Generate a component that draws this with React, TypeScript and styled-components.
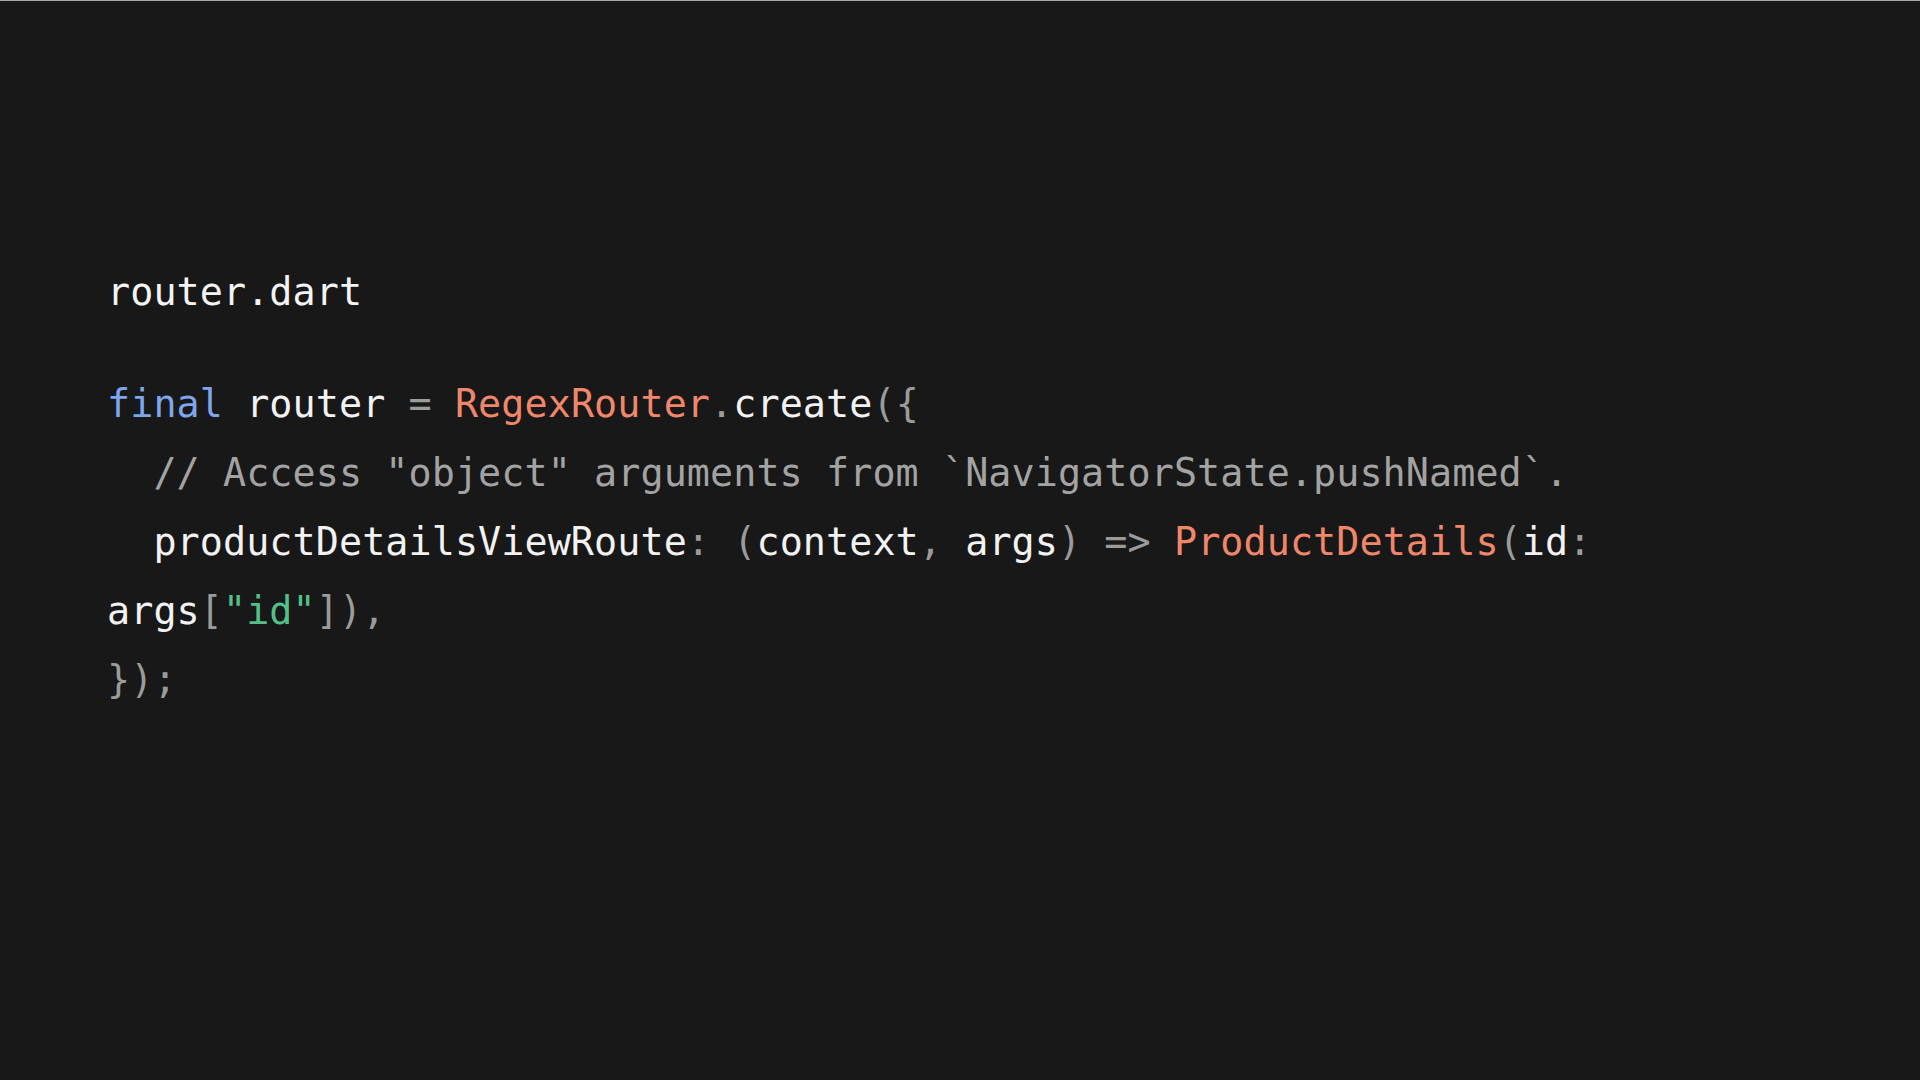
import React from "react";
import styled, { createGlobalStyle } from "styled-components";

const Global = createGlobalStyle`
  html, body { margin: 0; padding: 0; background: #181818; }
  body { font-family: "DejaVu Sans Mono", "Liberation Mono", monospace; }
`;

const Page = styled.div`
  box-sizing: border-box;
  width: 1920px;
  height: 1080px;
  background: #181818;
  border-top: 1px solid #a9a9a9;
  padding: 256px 0 0 107px;
  font-family: "DejaVu Sans Mono", "Liberation Mono", monospace;
  font-size: 38.4px;
  letter-spacing: 0.08px;
  line-height: 69px;
  color: #f2f2f2;
`;

const FileName = styled.div`
  margin-bottom: 43px;
  color: #f4f4f4;
`;

const Code = styled.pre`
  margin: 0;
  font: inherit;
  letter-spacing: inherit;
  width: 1600px;
  white-space: pre-wrap;
`;

type Kind = "kw" | "cls" | "punct" | "comment" | "str" | "id";

const colors: Record<Kind, string> = {
  kw: "#7fa5ee",
  cls: "#f0876b",
  punct: "#9b9b9b",
  comment: "#a3a3a3",
  str: "#55bf89",
  id: "#f2f2f2",
};

const Tok = styled.span<{ $k: Kind }>`
  color: ${(p) => colors[p.$k]};
`;

export default function App() {
  return (
    <>
      <Global />
      <Page>
        <FileName>router.dart</FileName>
        <Code>
          <Tok $k="kw">final</Tok>
          <Tok $k="id"> router </Tok>
          <Tok $k="punct">=</Tok> <Tok $k="cls">RegexRouter</Tok>
          <Tok $k="punct">.</Tok>
          <Tok $k="id">create</Tok>
          <Tok $k="punct">({"{"}</Tok>
          {"\n  "}
          <Tok $k="comment">// Access "object" arguments from `NavigatorState.pushNamed`.</Tok>
          {"\n  "}
          <Tok $k="id">productDetailsViewRoute</Tok>
          <Tok $k="punct">: (</Tok>
          <Tok $k="id">context</Tok>
          <Tok $k="punct">, </Tok>
          <Tok $k="id">args</Tok>
          <Tok $k="punct">) =&gt; </Tok>
          <Tok $k="cls">ProductDetails</Tok>
          <Tok $k="punct">(</Tok>
          <Tok $k="id">id</Tok>
          <Tok $k="punct">: </Tok>
          <Tok $k="id">args</Tok>
          <Tok $k="punct">[</Tok>
          <Tok $k="str">"id"</Tok>
          <Tok $k="punct">]),</Tok>
          {"\n"}
          <Tok $k="punct">{"});"}</Tok>
        </Code>
      </Page>
    </>
  );
}
